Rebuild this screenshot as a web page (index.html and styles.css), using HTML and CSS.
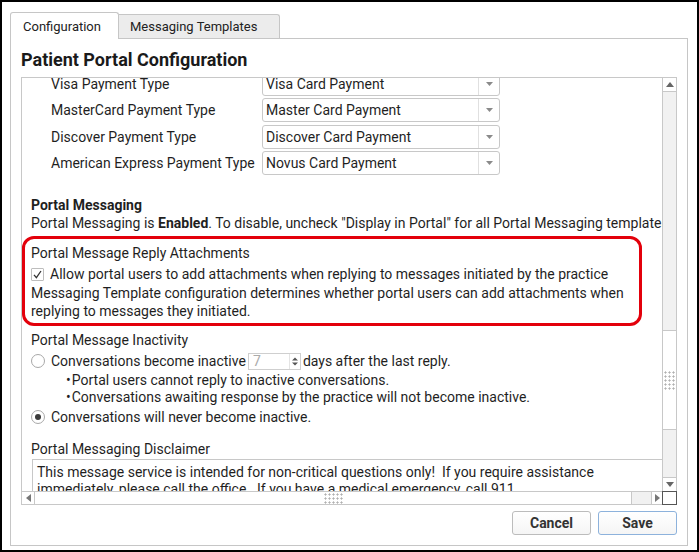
FILE: index.html
```html
<!DOCTYPE html>
<html lang="en">
<head>
<meta charset="utf-8">
<title>Patient Portal Configuration</title>
<link rel="stylesheet" href="styles.css">
</head>
<body>
<div class="frame">
  <div class="tabs">
    <div class="tab tab-active">Configuration</div>
    <div class="tab tab-idle">Messaging Templates</div>
  </div>

  <div class="panel">
    <h1 class="title">Patient Portal Configuration</h1>

    <div class="scrollbox">
      <div class="viewport">
        <div class="content">
          <div class="pay-rows">
            <div class="pay-row">
              <span class="pay-label">Visa Payment Type</span>
              <div class="select"><span class="select-value">Visa Card Payment</span><span class="select-arrow"><svg width="7" height="4" viewBox="0 0 7 4"><path d="M0 0h7L3.5 4z" fill="#8a8a8a"/></svg></span></div>
            </div>
            <div class="pay-row">
              <span class="pay-label">MasterCard Payment Type</span>
              <div class="select"><span class="select-value">Master Card Payment</span><span class="select-arrow"><svg width="7" height="4" viewBox="0 0 7 4"><path d="M0 0h7L3.5 4z" fill="#8a8a8a"/></svg></span></div>
            </div>
            <div class="pay-row">
              <span class="pay-label">Discover Payment Type</span>
              <div class="select"><span class="select-value">Discover Card Payment</span><span class="select-arrow"><svg width="7" height="4" viewBox="0 0 7 4"><path d="M0 0h7L3.5 4z" fill="#8a8a8a"/></svg></span></div>
            </div>
            <div class="pay-row">
              <span class="pay-label">American Express Payment Type</span>
              <div class="select"><span class="select-value">Novus Card Payment</span><span class="select-arrow"><svg width="7" height="4" viewBox="0 0 7 4"><path d="M0 0h7L3.5 4z" fill="#8a8a8a"/></svg></span></div>
            </div>
          </div>

          <h2 class="section-head">Portal Messaging</h2>
          <p class="line nowrap">Portal Messaging is <b>Enabled</b>. To disable, uncheck "Display in Portal" for all Portal Messaging templates.</p>

          <div class="callout">
            <div class="line">Portal Message Reply Attachments</div>
            <div class="check-row">
              <span class="checkbox"><svg width="9" height="9" viewBox="0 0 9 9"><polyline points="1,4.8 3.4,7.6 8,1" fill="none" stroke="#333" stroke-width="1.3"/></svg></span>
              <span>Allow portal users to add attachments when replying to messages initiated by the practice</span>
            </div>
            <p class="note">Messaging Template configuration determines whether portal users can add attachments when replying to messages they initiated.</p>
          </div>

          <div class="line sub-head">Portal Message Inactivity</div>
          <div class="radio-row">
            <span class="radio"></span>
            <span>Conversations become inactive</span>
            <span class="spin"><span class="spin-value">7</span><span class="spin-arrows"><svg width="6" height="9" viewBox="0 0 6 9"><path d="M0 3.6h6L3 0.4z M0 5.4h6L3 8.6z" fill="#555"/></svg></span></span>
            <span>days after the last reply.</span>
          </div>
          <ul class="bullets">
            <li>Portal users cannot reply to inactive conversations.</li>
            <li>Conversations awaiting response by the practice will not become inactive.</li>
          </ul>
          <div class="radio-row radio-row-last">
            <span class="radio radio-on"></span>
            <span>Conversations will never become inactive.</span>
          </div>

          <div class="line disclaimer-head">Portal Messaging Disclaimer</div>
          <div class="textarea"><div>This message service is intended for non-critical questions only!  If you require assistance</div><div>immediately, please call the office.  If you have a medical emergency, call 911.</div></div>
        </div>
      </div>

      <div class="vbar">
        <div class="sb-btn sb-up"><svg width="8" height="5" viewBox="0 0 8 5"><path d="M0 5h8L4 0z" fill="#666"/></svg></div>
        <div class="sb-track sb-track-top"></div>
        <div class="sb-thumb-v"><span class="grip grip-v"></span></div>
        <div class="sb-track sb-fill"></div>
        <div class="sb-btn sb-down"><svg width="8" height="5" viewBox="0 0 8 5"><path d="M0 0h8L4 5z" fill="#666"/></svg></div>
      </div>

      <div class="hbar">
        <div class="sb-btn sb-left"><svg width="5" height="8" viewBox="0 0 5 8"><path d="M5 0v8L0 4z" fill="#777"/></svg></div>
        <div class="sb-thumb-h"><span class="grip grip-h"></span></div>
        <div class="sb-track sb-track-right"></div>
        <div class="sb-btn sb-right"><svg width="5" height="8" viewBox="0 0 5 8"><path d="M0 0v8L5 4z" fill="#777"/></svg></div>
      </div>

      <div class="corner"></div>
    </div>

    <div class="actions">
      <button class="btn" type="button">Cancel</button>
      <button class="btn btn-focus" type="button">Save</button>
    </div>
  </div>
</div>
</body>
</html>
```

FILE: styles.css
```css
* {
  box-sizing: border-box;
}

html,
body {
  margin: 0;
  padding: 0;
  background: #fff;
}

body {
  font-family: Roboto, "Noto Sans", "Liberation Sans", sans-serif;
  font-size: 14px;
  color: #1f1f1f;
}

/* Window frame */
.frame {
  width: 699px;
  height: 552px;
  border: 2px solid #000;
  padding: 10px 9px 0 8px;
  display: flex;
  flex-direction: column;
}

/* Tab strip */
.tabs {
  display: flex;
  align-items: flex-end;
  height: 26px;
}

.tab {
  font-size: 13px;
  line-height: 16px;
  color: #222;
  border: 1px solid #c6c6c6;
  border-bottom: none;
  white-space: nowrap;
}

.tab-active {
  position: relative;
  z-index: 1;
  width: 109px;
  height: 27px;
  margin-bottom: -1px;
  padding: 6px 0 0 12px;
  background: #fff;
  border-radius: 3px 3px 0 0;
}

.tab-idle {
  width: 161px;
  height: 24px;
  padding: 4px 0 0 11px;
  background: #ececec;
  border-left: none;
  border-radius: 0 3px 0 0;
}

/* Tab body */
.panel {
  width: 678px;
  height: 508px;
  border: 1px solid #c6c6c6;
  padding: 0 10px 10px 10px;
  display: flex;
  flex-direction: column;
  background: #fff;
}

.title {
  margin: 9px 0 5px 0;
  font-size: 18px;
  line-height: 24px;
  font-weight: 700;
  color: #1a1a1a;
}

/* Scrolling form area with its scrollbars */
.scrollbox {
  width: 656px;
  height: 428px;
  border: 1px solid #c8c8c8;
  display: grid;
  grid-template-columns: 640px 14px;
  grid-template-rows: 413px 13px;
}

.viewport {
  overflow: hidden;
}

.content {
  width: 820px;
  margin-top: -6px;
  padding-left: 9px;
}

.pay-rows {
  padding-left: 20px;
}

.pay-row {
  display: flex;
  align-items: center;
  height: 24px;
  margin-bottom: 2px;
}

.pay-row:nth-child(2) {
  margin-bottom: 3px;
}

.pay-label {
  width: 211px;
  line-height: 18px;
}

.select {
  display: flex;
  width: 238px;
  height: 24px;
  border: 1px solid #c8c8c8;
  border-radius: 3px;
  background: #fff;
}

.select-value {
  flex: 1;
  padding-left: 3px;
  line-height: 22px;
}

.select-arrow {
  width: 21px;
  border-left: 1px solid #e0e0e0;
  display: flex;
  align-items: center;
  justify-content: center;
}

.section-head {
  margin: 21px 0 0 0;
  font-size: 14px;
  line-height: 18px;
  font-weight: 700;
}

.line {
  margin: 0;
  line-height: 18px;
}

.nowrap {
  white-space: nowrap;
}

.callout {
  width: 620px;
  margin: 4px 0 0 -9px;
  padding: 5px 6px 3px 6px;
  border: 3px solid #e3000b;
  border-radius: 12px;
}

.check-row {
  display: flex;
  align-items: center;
  height: 18px;
  margin-top: 3px;
  line-height: 18px;
}

.checkbox {
  width: 13px;
  height: 13px;
  margin-right: 6px;
  border: 1px solid #bdbdbd;
  border-radius: 1px;
  display: flex;
  align-items: center;
  justify-content: center;
  background: #fff;
}

.note {
  margin: 1px 0 0 0;
  line-height: 18px;
}

.sub-head {
  margin-top: 5px;
}

.radio-row {
  display: flex;
  align-items: center;
  height: 20px;
  margin-top: 2px;
  white-space: nowrap;
}

.radio-row-last {
  margin-top: 1px;
}

.radio {
  width: 14px;
  height: 14px;
  margin-right: 6px;
  border: 1px solid #a8a8a8;
  border-radius: 50%;
  background: #fff;
  display: flex;
  align-items: center;
  justify-content: center;
}

.radio-on::after {
  content: "";
  width: 6px;
  height: 6px;
  border-radius: 50%;
  background: #3a3a3a;
}

.spin {
  display: flex;
  width: 53px;
  height: 17px;
  margin: 0 2px;
  border: 1px solid #cfcfcf;
  background: #fff;
}

.spin-value {
  flex: 1;
  padding-left: 4px;
  line-height: 15px;
  color: #ababab;
}

.spin-arrows {
  width: 11px;
  border-left: 1px solid #e4e4e4;
  display: flex;
  align-items: center;
  justify-content: center;
}

.bullets {
  margin: 1px 0 0 0;
  padding: 0 0 0 35px;
  list-style: none;
}

.bullets li {
  line-height: 17px;
  white-space: nowrap;
}

.bullets li::before {
  content: "\2022";
  margin-right: 1px;
}

.disclaimer-head {
  margin-top: 13px;
}

.textarea {
  width: 700px;
  height: 64px;
  margin: 1px 0 0 1px;
  padding: 4px 4px;
  border: 1px solid #c8c8c8;
  line-height: 17px;
  white-space: pre;
}

/* Scrollbars */
.vbar {
  display: flex;
  flex-direction: column;
  border-left: 1px solid #c8c8c8;
}

.hbar {
  display: flex;
  border-top: 1px solid #c8c8c8;
}

.sb-btn {
  display: flex;
  align-items: center;
  justify-content: center;
  background: #fff;
}

.sb-up {
  height: 14px;
  border-bottom: 1px solid #c8c8c8;
}

.sb-down {
  height: 14px;
  border-top: 1px solid #c8c8c8;
}

.sb-left {
  width: 13px;
  border-right: 1px solid #c8c8c8;
}

.sb-right {
  flex: 1;
  border-left: 1px solid #c8c8c8;
}

.sb-track {
  background: #f1f1f1;
}

.sb-track-top {
  height: 238px;
}

.sb-fill {
  flex: 1;
}

.sb-track-right {
  width: 19px;
}

.sb-thumb-v {
  height: 100px;
  background: #fff;
  border-top: 1px solid #c8c8c8;
  border-bottom: 1px solid #c8c8c8;
  display: flex;
  align-items: center;
  justify-content: center;
}

.sb-thumb-h {
  width: 597px;
  background: #fff;
  border-right: 1px solid #c8c8c8;
  display: flex;
  align-items: center;
  justify-content: center;
}

.grip {
  display: block;
  background-image: radial-gradient(circle at 1.5px 1.5px, #b0b0b0 0.9px, transparent 1.2px);
  background-size: 4px 4px;
}

.grip-v {
  width: 11px;
  height: 19px;
}

.grip-h {
  width: 19px;
  height: 11px;
}

.corner {
  margin: 0 -1px -1px 0;
  border: 1px solid #555;
  background: #fff;
}

/* Dialog buttons */
.actions {
  display: flex;
  justify-content: flex-end;
  gap: 7px;
  margin-top: 6px;
}

.btn {
  width: 79px;
  height: 24px;
  padding: 0;
  border: 1px solid #bcbcbc;
  border-radius: 3px;
  background: linear-gradient(#ffffff, #f5f5f5);
  font-family: Roboto, "Noto Sans", "Liberation Sans", sans-serif;
  font-size: 14px;
  font-weight: 700;
  color: #333;
}

.btn-focus {
  border-color: #8db2dc;
}
```
